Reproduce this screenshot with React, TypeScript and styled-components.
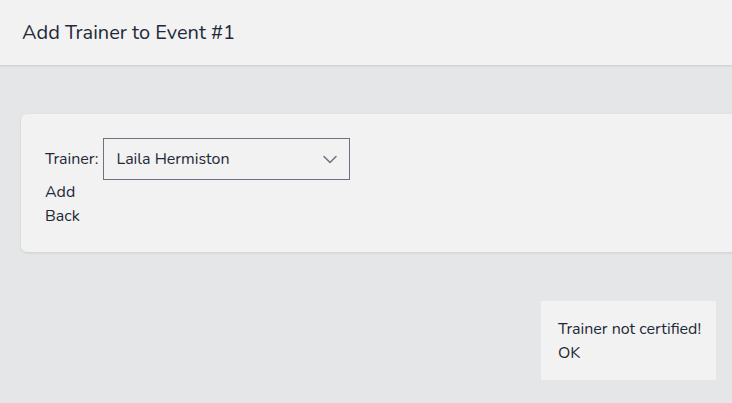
import * as React from "react";
import styled, { createGlobalStyle } from "styled-components";

const GlobalStyle = createGlobalStyle`
  html, body {
    margin: 0;
    padding: 0;
    background: #e5e6e8;
    font-family: "Nunito", "Lato", "Open Sans", sans-serif;
    color: #1f2937;
    overflow: hidden;
  }
`;

const Page = styled.div`
  min-height: 403px;
  display: flex;
  flex-direction: column;
`;

const Header = styled.header`
  height: 65px;
  background: #f2f2f2;
  display: flex;
  align-items: center;
  padding: 0 22px;
  box-shadow: 0 1px 2px rgba(0, 0, 0, 0.12);
`;

const Title = styled.h1`
  margin: 0;
  font-size: 20px;
  font-weight: 400;
  color: #1f2937;
`;

const Main = styled.main`
  padding: 49px 0 0 21px;
`;

const Card = styled.section`
  margin-right: -24px;
  background: #f2f2f2;
  border-radius: 6px;
  box-shadow: 0 1px 3px rgba(0, 0, 0, 0.1);
  padding: 24px 24px 24px;
  display: flex;
  flex-direction: column;
  font-size: 16px;
  line-height: 24px;
`;

const Field = styled.label`
  display: flex;
  align-items: center;
  gap: 5px;
`;

const SelectBox = styled.div`
  box-sizing: border-box;
  width: 247px;
  height: 42px;
  border: 1px solid #6b7280;
  display: flex;
  align-items: center;
  justify-content: space-between;
  padding: 0 9px 0 12px;
`;

const LinkText = styled.a`
  color: #1f2937;
  text-decoration: none;
  cursor: pointer;
`;

const Toast = styled.div`
  position: fixed;
  right: 16px;
  bottom: 23px;
  width: 175px;
  box-sizing: border-box;
  background: #f2f2f2;
  padding: 16px 12px 15px 17px;
  font-size: 16px;
  line-height: 24px;
  white-space: nowrap;
  display: flex;
  flex-direction: column;
`;

const Chevron = () => (
  <svg width="20" height="20" viewBox="0 0 20 20" fill="none">
    <path d="M4 7.5l6 6 6-6" stroke="#6b7280" strokeWidth="1.5" strokeLinecap="round" strokeLinejoin="round" />
  </svg>
);

export default function App() {
  return (
    <Page>
      <GlobalStyle />
      <Header>
        <Title>Add Trainer to Event #1</Title>
      </Header>
      <Main>
        <Card>
          <Field>
            Trainer:
            <SelectBox>
              <span>Laila Hermiston</span>
              <Chevron />
            </SelectBox>
          </Field>
          <LinkText>Add</LinkText>
          <LinkText>Back</LinkText>
        </Card>
      </Main>
      <Toast>
        <span>Trainer not certified!</span>
        <LinkText>OK</LinkText>
      </Toast>
    </Page>
  );
}
